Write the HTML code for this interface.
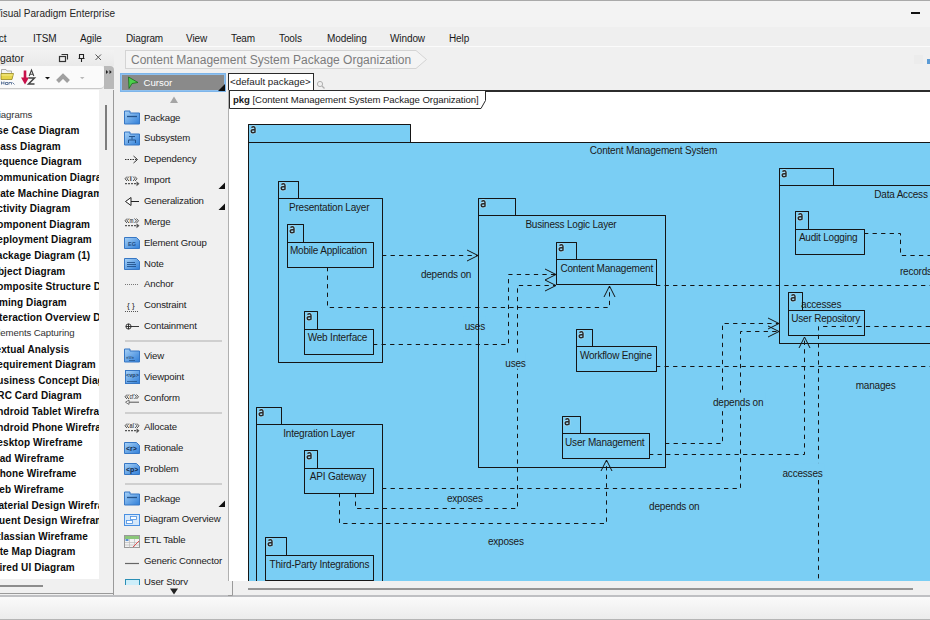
<!DOCTYPE html>
<html><head><meta charset="utf-8">
<style>
*{margin:0;padding:0;box-sizing:border-box}
html,body{width:930px;height:620px;overflow:hidden;background:#f0f0f0;font-family:"Liberation Sans",sans-serif;color:#1a1a1a}
.a{position:absolute;white-space:nowrap}
.mi{position:absolute;top:33px;font-size:10px;color:#1a1a1a;letter-spacing:-0.1px}
.tr{position:absolute;left:-10px;font-size:10px;font-weight:bold;color:#0c0c0c;letter-spacing:0.1px;height:15px;line-height:15px}
.tn{font-weight:normal;color:#333;letter-spacing:-0.1px;font-size:9.6px;left:-8px;margin-top:-1px}
.pi{position:absolute;left:144px;font-size:9.6px;color:#1a1a1a;height:14px;line-height:14px;letter-spacing:-0.15px}
</style></head><body>
<div class="a" style="left:0;top:0;width:930px;height:27px;background:#f3f3f3;border-top:1px solid #a9a9a9"></div>
<span class="a" style="left:-6px;top:8px;font-size:10px;color:#262626">Visual Paradigm Enterprise</span>
<div class="a" style="left:911px;top:12px;width:9px;height:2px;background:#111"></div>
<div class="a" style="left:0;top:27px;width:930px;height:20px;background:#efefef;border-bottom:1px solid #fbfbfb"></div>
<span class="mi a" style="left:-24px">Project</span>
<span class="mi a" style="left:33px">ITSM</span>
<span class="mi a" style="left:80px">Agile</span>
<span class="mi a" style="left:126px">Diagram</span>
<span class="mi a" style="left:186px">View</span>
<span class="mi a" style="left:231px">Team</span>
<span class="mi a" style="left:279px">Tools</span>
<span class="mi a" style="left:327px">Modeling</span>
<span class="mi a" style="left:390px">Window</span>
<span class="mi a" style="left:449px">Help</span>
<div class="a" style="left:125px;top:50px;width:290px;height:19px;background:#f4f4f4;border:1px solid #d4d4d4;border-right:none"></div>
<span class="a" style="left:131px;top:52.8px;font-size:12px;color:#7c7c7c">Content Management System Package Organization</span>
<svg class="a" style="left:414px;top:50px" width="16" height="20"><path d="M0,0.5H2L12.5,9.5L2,18.5H0" fill="#f4f4f4" stroke="#d4d4d4"/></svg>
<div class="a" style="left:914px;top:55px;width:9px;height:9px;background:#ececec"></div><div class="a" style="left:927px;top:59px;width:3px;height:5px;background:#5b9bd5"></div>

<div class="a" style="left:0;top:50px;width:114px;height:16px;background:linear-gradient(#f2f2f2,#e9e9e9)"></div>
<span class="a" style="left:-21px;top:52px;font-size:10.5px;color:#222">Navigator</span>
<svg class="a" style="left:56px;top:52px" width="50" height="12"><rect x="3.5" y="4.5" width="6" height="5" fill="none" stroke="#333" stroke-width="1.2"/><path d="M5.5,2.5H11.5V7.5" fill="none" stroke="#333" stroke-width="1.1"/><path d="M23.5,2.5H27.5V6.5H23.5ZM22.5,6.5H28.5M25.5,6.5V10" fill="none" stroke="#222" stroke-width="1.1"/><path d="M39.5,2.5L45,8M45,2.5L39.5,8" stroke="#555" stroke-width="1"/></svg>
<div class="a" style="left:0;top:66px;width:104px;height:23px;background:#fafafa;border-radius:0 4px 4px 0;border-bottom:1px solid #c9c9c9"></div>
<div class="a" style="left:104px;top:66px;width:10px;height:23px;background:#b9b9b9;border-radius:0 4px 0 0"></div>
<svg class="a" style="left:0;top:66px" width="114" height="24">
  <path d="M1.5,12V3.5H6L7,5H11.5V7" fill="#f4f4f4" stroke="#9a9a9a" stroke-width=".8"/>
  <path d="M1,7.5H13.5L12,13.5H1Z" fill="#e6d44a" stroke="#8a7a10" stroke-width=".7"/>
  <path d="M1.5,9H12.8" stroke="#f5ec90" stroke-width="1"/>
  <path d="M1.5,15.5V18.5M1.5,17H4M4,15.5V18.5M5.5,16.5H8V18.5H5.5ZM9,18.5V16.5H11.5V18.5M12.5,16.5L14.5,18.5" stroke="#44608a" stroke-width=".8" fill="none"/>
  <path d="M25,4.5V13" stroke="#c8104a" stroke-width="2.6"/><path d="M21,11.5L25,18.5L29,11.5Z" fill="#c8104a"/>
  <path d="M29.2,10L31.5,4L33.8,10M30,8.2H33" stroke="#444" stroke-width="1.1" fill="none"/>
  <path d="M28.5,12H34.5L28.5,18H34.5" stroke="#444" stroke-width="1.5" fill="none"/>
  <path d="M45,11H50L47.5,13.5Z" fill="#111"/>
  <path d="M57.5,15.5L63,10L68.5,15.5" fill="none" stroke="#a0a0a0" stroke-width="4"/>
  <path d="M80,11H84.5L82.2,13.2Z" fill="#b8b8b8"/>
  <path d="M106,4L108.2,6L106,8ZM109.5,4L111.7,6L109.5,8Z" fill="#222"/>
</svg>
<div class="a" style="left:0;top:90px;width:99px;height:489px;background:#fff;overflow:hidden">
<span class="tr tn" style="top:17.5px">Diagrams</span>
<span class="tr" style="top:33.1px">Use Case Diagram</span>
<span class="tr" style="top:48.7px">Class Diagram</span>
<span class="tr" style="top:64.3px">Sequence Diagram</span>
<span class="tr" style="top:79.9px">Communication Diagram</span>
<span class="tr" style="top:95.5px">State Machine Diagram</span>
<span class="tr" style="top:111.1px">Activity Diagram</span>
<span class="tr" style="top:126.7px">Component Diagram</span>
<span class="tr" style="top:142.3px">Deployment Diagram</span>
<span class="tr" style="top:157.9px">Package Diagram (1)</span>
<span class="tr" style="top:173.5px">Object Diagram</span>
<span class="tr" style="top:189.1px">Composite Structure Diagram</span>
<span class="tr" style="top:204.7px">Timing Diagram</span>
<span class="tr" style="top:220.3px">Interaction Overview Diagram</span>
<span class="tr tn" style="top:235.9px">Elements Capturing</span>
<span class="tr" style="top:251.5px">Textual Analysis</span>
<span class="tr" style="top:267.1px">Requirement Diagram</span>
<span class="tr" style="top:282.7px">Business Concept Diagram</span>
<span class="tr" style="top:298.3px">CRC Card Diagram</span>
<span class="tr" style="top:313.9px">Android Tablet Wireframe</span>
<span class="tr" style="top:329.5px">Android Phone Wireframe</span>
<span class="tr" style="top:345.1px">Desktop Wireframe</span>
<span class="tr" style="top:360.7px">iPad Wireframe</span>
<span class="tr" style="top:376.3px">iPhone Wireframe</span>
<span class="tr" style="top:391.9px">Web Wireframe</span>
<span class="tr" style="top:407.5px">Material Design Wireframe</span>
<span class="tr" style="top:423.1px">Fluent Design Wireframe</span>
<span class="tr" style="top:438.7px">Atlassian Wireframe</span>
<span class="tr" style="top:454.3px">Site Map Diagram</span>
<span class="tr" style="top:469.9px">Wired UI Diagram</span>
</div>
<div class="a" style="left:99px;top:90px;width:14px;height:504px;background:#f0f0f0"></div><div class="a" style="left:0;top:579px;width:99px;height:14px;background:#f0f0f0"></div>
<div class="a" style="left:105px;top:105px;width:2px;height:45px;background:#7d7d7d"></div>
<div class="a" style="left:0;top:585px;width:43px;height:2px;background:#8c8c8c"></div>
<div class="a" style="left:113px;top:90px;width:1px;height:505px;background:#9a9a9a"></div>
<div class="a" style="left:0;top:593px;width:114px;height:1px;background:#9a9a9a"></div>


<div class="a" style="left:118px;top:72px;width:110px;height:513px;overflow:hidden">
<div class="a" style="left:-118px;top:-72px;width:930px;height:620px">
<svg class="a" style="left:124px;top:109.8px" width="17" height="17"><defs><linearGradient id="bg0" x1="0" y1="0" x2="1" y2="1"><stop offset="0" stop-color="#a8d2f7"/><stop offset="1" stop-color="#2f7ed8"/></linearGradient></defs><path d="M0.5,1H6V3H15.5V14H0.5Z" fill="url(#bg0)" stroke="#3777c4" stroke-width="1"/><path d="M3,6.5H13" stroke="#24548c" stroke-width="1.3"/></svg>
<svg class="a" style="left:124px;top:130.6px" width="17" height="17"><defs><linearGradient id="bg1" x1="0" y1="0" x2="1" y2="1"><stop offset="0" stop-color="#a8d2f7"/><stop offset="1" stop-color="#2f7ed8"/></linearGradient></defs><path d="M0.5,1H6V3H15.5V14H0.5Z" fill="url(#bg1)" stroke="#3777c4" stroke-width="1"/><path d="M5,5.5H11M8,5.5V8.5M4.5,12V9H11.5V12" fill="none" stroke="#24548c" stroke-width="1"/></svg>
<svg class="a" style="left:124px;top:151.4px" width="17" height="17"><path d="M1,8.5H13" stroke="#333" stroke-dasharray="1.5 1"/><path d="M9.5,5L13.5,8.5L9.5,12" fill="none" stroke="#333"/></svg>
<svg class="a" style="left:124px;top:172.1px" width="17" height="17"><path d="M3,4.5L1,6.8L3,9M5,4.5L3,6.8L5,9" fill="none" stroke="#555" stroke-width="1"/><text x="5.5" y="9.2" font-size="7" font-weight="bold" font-family="Liberation Sans" fill="#555" textLength="2.5" lengthAdjust="spacingAndGlyphs">i</text><path d="M9.0,4.5L11.0,6.8L9.0,9M11.0,4.5L13.0,6.8L11.0,9" fill="none" stroke="#555" stroke-width="1"/><path d="M1,11.7H13" stroke="#555" stroke-width="1.2" stroke-dasharray="2 1"/><path d="M12.5,9.2L15.5,11.7L12.5,14.2Z" fill="#555"/></svg>
<svg class="a" style="left:124px;top:193.4px" width="17" height="17"><path d="M1.5,8.5L7,4.5V12.5Z" fill="#fff" stroke="#222"/><path d="M7,8.5H15" stroke="#222"/></svg>
<svg class="a" style="left:124px;top:213.7px" width="17" height="17"><path d="M3,4.5L1,6.8L3,9M5,4.5L3,6.8L5,9" fill="none" stroke="#555" stroke-width="1"/><text x="5.5" y="9.2" font-size="7" font-weight="bold" font-family="Liberation Sans" fill="#555" textLength="4" lengthAdjust="spacingAndGlyphs">m</text><path d="M10.5,4.5L12.5,6.8L10.5,9M12.5,4.5L14.5,6.8L12.5,9" fill="none" stroke="#555" stroke-width="1"/><path d="M1,11.7H13" stroke="#555" stroke-width="1.2" stroke-dasharray="2 1"/><path d="M12.5,9.2L15.5,11.7L12.5,14.2Z" fill="#555"/></svg>
<svg class="a" style="left:124px;top:234.9px" width="17" height="17"><defs><linearGradient id="bg6" x1="0" y1="0" x2="1" y2="1"><stop offset="0" stop-color="#a8d2f7"/><stop offset="1" stop-color="#2f7ed8"/></linearGradient></defs><path d="M0.5,2.5H12.5L15.5,5.5V13.5H0.5Z" fill="url(#bg6)" stroke="#3777c4" stroke-width="1"/><text x="4" y="11" font-size="5.5" font-family="Liberation Sans" font-weight="bold" fill="#1f4f86">EG</text></svg>
<svg class="a" style="left:124px;top:255.7px" width="17" height="17"><defs><linearGradient id="bg7" x1="0" y1="0" x2="1" y2="1"><stop offset="0" stop-color="#a8d2f7"/><stop offset="1" stop-color="#2f7ed8"/></linearGradient></defs><path d="M0.5,2.5H12.5L15.5,5.5V13.5H0.5Z" fill="url(#bg7)" stroke="#3777c4" stroke-width="1"/><path d="M3,6.5H11M3,8.5H12M3,10.5H12" stroke="#24548c" stroke-width=".9"/></svg>
<svg class="a" style="left:124px;top:276.4px" width="17" height="17"><path d="M1,8.5H15" stroke="#777" stroke-dasharray="1 1"/></svg>
<svg class="a" style="left:124px;top:297.6px" width="17" height="17"><text x="3" y="10" font-size="8" font-family="Liberation Sans" font-weight="normal" fill="#222">{ }</text><path d="M1,13.5H15" stroke="#555" stroke-dasharray="1 1"/></svg>
<svg class="a" style="left:124px;top:318.4px" width="17" height="17"><circle cx="4.5" cy="8.5" r="2.6" fill="none" stroke="#222" stroke-width=".9"/><path d="M1.9,8.5H15M4.5,5.9V11.1" stroke="#222" stroke-width=".9"/></svg>
<svg class="a" style="left:124px;top:348.2px" width="17" height="17"><defs><linearGradient id="bg11" x1="0" y1="0" x2="1" y2="1"><stop offset="0" stop-color="#a8d2f7"/><stop offset="1" stop-color="#2f7ed8"/></linearGradient></defs><path d="M0.5,1H6V3H15.5V14H0.5Z" fill="url(#bg11)" stroke="#3777c4" stroke-width="1"/><text x="2" y="11" font-size="5" font-family="Liberation Sans" font-weight="normal" fill="#1f3f66">«v»</text><path d="M5,12.5H11" stroke="#24548c" stroke-width=".8"/></svg>
<svg class="a" style="left:124px;top:369.3px" width="17" height="17"><defs><linearGradient id="bg12" x1="0" y1="0" x2="1" y2="1"><stop offset="0" stop-color="#a8d2f7"/><stop offset="1" stop-color="#2f7ed8"/></linearGradient></defs><rect x="1.5" y="1.5" width="14" height="13" fill="url(#bg12)" stroke="#3777c4"/><text x="2" y="8" font-size="5.5" font-family="Liberation Sans" font-weight="bold" fill="#1f3f66">&lt;vp&gt;</text><path d="M3,12.5H13" stroke="#24548c" stroke-width=".8"/></svg>
<svg class="a" style="left:124px;top:389.9px" width="17" height="17"><path d="M3,4.5L1,6.8L3,9M5,4.5L3,6.8L5,9" fill="none" stroke="#555" stroke-width="1"/><text x="5.5" y="9.2" font-size="7" font-weight="bold" font-family="Liberation Sans" fill="#555" textLength="4" lengthAdjust="spacingAndGlyphs">cf</text><path d="M10.5,4.5L12.5,6.8L10.5,9M12.5,4.5L14.5,6.8L12.5,9" fill="none" stroke="#555" stroke-width="1"/><path d="M3,12.2H15" stroke="#555" stroke-width="1"/><path d="M5,10L1.5,12.2L5,14.4Z" fill="#fff" stroke="#555" stroke-width=".8"/></svg>
<svg class="a" style="left:124px;top:419.3px" width="17" height="17"><path d="M3,4.5L1,6.8L3,9M5,4.5L3,6.8L5,9" fill="none" stroke="#555" stroke-width="1"/><text x="5.5" y="9.2" font-size="7" font-weight="bold" font-family="Liberation Sans" fill="#555" textLength="4.5" lengthAdjust="spacingAndGlyphs">al</text><path d="M11.0,4.5L13.0,6.8L11.0,9M13.0,4.5L15.0,6.8L13.0,9" fill="none" stroke="#555" stroke-width="1"/><path d="M1,11.7H13" stroke="#555" stroke-width="1.2" stroke-dasharray="2 1"/><path d="M12.5,9.2L15.5,11.7L12.5,14.2Z" fill="#555"/></svg>
<svg class="a" style="left:124px;top:440.4px" width="17" height="17"><defs><linearGradient id="bg15" x1="0" y1="0" x2="1" y2="1"><stop offset="0" stop-color="#a8d2f7"/><stop offset="1" stop-color="#2f7ed8"/></linearGradient></defs><path d="M0.5,2.5H12.5L15.5,5.5V13.5H0.5Z" fill="url(#bg15)" stroke="#3777c4" stroke-width="1"/><text x="2" y="11" font-size="7" font-family="Liberation Sans" font-weight="bold" fill="#112a4a">&lt;r&gt;</text></svg>
<svg class="a" style="left:124px;top:461.4px" width="17" height="17"><defs><linearGradient id="bg16" x1="0" y1="0" x2="1" y2="1"><stop offset="0" stop-color="#a8d2f7"/><stop offset="1" stop-color="#2f7ed8"/></linearGradient></defs><path d="M0.5,2.5H12.5L15.5,5.5V13.5H0.5Z" fill="url(#bg16)" stroke="#3777c4" stroke-width="1"/><text x="2" y="11" font-size="7" font-family="Liberation Sans" font-weight="bold" fill="#112a4a">&lt;p&gt;</text></svg>
<svg class="a" style="left:124px;top:490.9px" width="17" height="17"><defs><linearGradient id="bg17" x1="0" y1="0" x2="1" y2="1"><stop offset="0" stop-color="#a8d2f7"/><stop offset="1" stop-color="#2f7ed8"/></linearGradient></defs><path d="M0.5,1H6V3H15.5V14H0.5Z" fill="url(#bg17)" stroke="#3777c4" stroke-width="1"/><path d="M3,6.5H13" stroke="#24548c" stroke-width="1.3"/></svg>
<svg class="a" style="left:124px;top:511.5px" width="17" height="17"><rect x="0.5" y="2.5" width="15" height="11" fill="#d6e8fa" stroke="#4a90e2"/><rect x="6.5" y="4.5" width="6" height="3" fill="#fff" stroke="#4a90e2" stroke-width=".8"/><rect x="2.5" y="8.5" width="6" height="3" fill="#fff" stroke="#4a90e2" stroke-width=".8"/></svg>
<svg class="a" style="left:124px;top:532.5px" width="17" height="17"><rect x="0.5" y="2.5" width="15" height="12" fill="#f2f2f2" stroke="#999"/><rect x="1" y="3" width="14" height="3" fill="#8bc77a"/><path d="M1,9.5H15M1,12H15M5.5,6V14.5M10.5,6V14.5" stroke="#bbb" stroke-width=".7"/><path d="M9,14L15,8" stroke="#e05050" stroke-width="1"/><rect x="1.5" y="6" width="3" height="2" fill="#5b8fd0"/></svg>
<svg class="a" style="left:124px;top:553.5px" width="17" height="17"><path d="M1,9.5H15" stroke="#666" stroke-width="1.2"/></svg>
<svg class="a" style="left:124px;top:573.7px" width="17" height="17"><rect x="1.5" y="5.5" width="14" height="10" fill="#cdeefa" stroke="#2a8fb5"/></svg>
<span class="pi" style="top:110.6px">Package</span>
<span class="pi" style="top:131.4px">Subsystem</span>
<span class="pi" style="top:152.2px">Dependency</span>
<span class="pi" style="top:172.9px">Import</span>
<span class="pi" style="top:194.2px">Generalization</span>
<span class="pi" style="top:214.5px">Merge</span>
<span class="pi" style="top:235.7px">Element Group</span>
<span class="pi" style="top:256.5px">Note</span>
<span class="pi" style="top:277.2px">Anchor</span>
<span class="pi" style="top:298.4px">Constraint</span>
<span class="pi" style="top:319.2px">Containment</span>
<span class="pi" style="top:349.0px">View</span>
<span class="pi" style="top:370.1px">Viewpoint</span>
<span class="pi" style="top:390.7px">Conform</span>
<span class="pi" style="top:420.1px">Allocate</span>
<span class="pi" style="top:441.2px">Rationale</span>
<span class="pi" style="top:462.2px">Problem</span>
<span class="pi" style="top:491.7px">Package</span>
<span class="pi" style="top:512.3px">Diagram Overview</span>
<span class="pi" style="top:533.3px">ETL Table</span>
<span class="pi" style="top:554.3px">Generic Connector</span>
<span class="pi" style="top:574.5px">User Story</span>
</div></div>
<div class="a" style="left:125px;top:340px;width:97px;height:2px;background:#cfcfcf"></div>
<div class="a" style="left:125px;top:412px;width:97px;height:2px;background:#cfcfcf"></div>
<div class="a" style="left:125px;top:483px;width:97px;height:2px;background:#cfcfcf"></div>
<svg class="a" style="left:218px;top:182px" width="8" height="8"><path d="M7,0.5V7H0.5Z" fill="#111"/></svg>
<svg class="a" style="left:218px;top:203px" width="8" height="8"><path d="M7,0.5V7H0.5Z" fill="#111"/></svg>
<svg class="a" style="left:218px;top:500px" width="8" height="8"><path d="M7,0.5V7H0.5Z" fill="#111"/></svg>
<svg class="a" style="left:169px;top:587px" width="10" height="9"><path d="M1,1.5H9L5,7.5Z" fill="#222"/></svg>

<div class="a" style="left:120px;top:73px;width:106px;height:19px;background:#8a8a8a;border:1px solid #7db5ea;box-shadow:inset 0 0 0 1px #8fc0ee"></div>
<svg class="a" style="left:126px;top:76px" width="16" height="14"><path d="M2.5,1L12,6.5L6,7.5L3,12.5Z" fill="#4cd04c" stroke="#1a6a1a" stroke-width=".8"/></svg>
<span class="a" style="left:143.5px;top:77.2px;font-size:9.6px;color:#fff">Cursor</span>
<svg class="a" style="left:218px;top:84px" width="8" height="8"><path d="M7,0V7H0Z" fill="#111"/></svg>
<svg class="a" style="left:169px;top:95px" width="10" height="9"><path d="M1,8L5,1.5L9,8Z" fill="#a5a5a5"/></svg>


<div class="a" style="left:228px;top:90px;width:702px;height:491px;background:#fff;overflow:hidden">
<svg class="a" style="left:-228px;top:-90px" width="1100" height="720">
<style>.f{fill:#7acef4;stroke:none} .s{fill:none;stroke:#151515;stroke-width:1} .d{fill:none;stroke:#151515;stroke-width:1;stroke-dasharray:4.3 4.25} .lb{font-family:"Liberation Sans",sans-serif;font-size:10px;letter-spacing:-0.2px;fill:#1a1a1a} .ta{font-family:"Liberation Sans",sans-serif;font-size:11.5px;font-weight:bold;fill:#2a2a2a} .m{fill:#7acef4} .ap{fill:none;stroke:#2a2a2a;stroke-width:1.45} .ah{fill:none;stroke:rgba(255,255,255,.35);stroke-width:2.8}</style>
<rect x="248.5" y="124.5" width="162" height="18" class="f"/><rect x="248.5" y="142.5" width="812" height="558" class="f"/><g transform="translate(250.4,126.4)"><path d="M1,1.1Q2.1,0.2 3.3,0.3Q4.6,0.5 4.6,2.1V6.4M4.6,3.3H2.5Q0.8,3.3 0.8,4.9Q0.8,6.4 2.4,6.4Q3.8,6.4 4.6,5.5" class="ah"/><path d="M1,1.1Q2.1,0.2 3.3,0.3Q4.6,0.5 4.6,2.1V6.4M4.6,3.3H2.5Q0.8,3.3 0.8,4.9Q0.8,6.4 2.4,6.4Q3.8,6.4 4.6,5.5" class="ap"/></g><path d="M248.5,700.5V124.5H410.5V142.5M248.5,142.5H1060.5V700.5H248.5" class="s"/>
<rect x="278.5" y="181.5" width="20" height="17" class="f"/><rect x="278.5" y="198.5" width="104" height="164" class="f"/><g transform="translate(280.4,183.4)"><path d="M1,1.1Q2.1,0.2 3.3,0.3Q4.6,0.5 4.6,2.1V6.4M4.6,3.3H2.5Q0.8,3.3 0.8,4.9Q0.8,6.4 2.4,6.4Q3.8,6.4 4.6,5.5" class="ah"/><path d="M1,1.1Q2.1,0.2 3.3,0.3Q4.6,0.5 4.6,2.1V6.4M4.6,3.3H2.5Q0.8,3.3 0.8,4.9Q0.8,6.4 2.4,6.4Q3.8,6.4 4.6,5.5" class="ap"/></g><path d="M278.5,362.5V181.5H298.5V198.5M278.5,198.5H382.5V362.5H278.5" class="s"/>
<rect x="287.5" y="224.5" width="16" height="18" class="f"/><rect x="287.5" y="242.5" width="86" height="25" class="f"/><g transform="translate(289.4,226.4)"><path d="M1,1.1Q2.1,0.2 3.3,0.3Q4.6,0.5 4.6,2.1V6.4M4.6,3.3H2.5Q0.8,3.3 0.8,4.9Q0.8,6.4 2.4,6.4Q3.8,6.4 4.6,5.5" class="ah"/><path d="M1,1.1Q2.1,0.2 3.3,0.3Q4.6,0.5 4.6,2.1V6.4M4.6,3.3H2.5Q0.8,3.3 0.8,4.9Q0.8,6.4 2.4,6.4Q3.8,6.4 4.6,5.5" class="ap"/></g><path d="M287.5,267.5V224.5H303.5V242.5M287.5,242.5H373.5V267.5H287.5" class="s"/>
<rect x="304.5" y="311.5" width="13" height="18" class="f"/><rect x="304.5" y="329.5" width="69" height="25" class="f"/><g transform="translate(306.4,313.4)"><path d="M1,1.1Q2.1,0.2 3.3,0.3Q4.6,0.5 4.6,2.1V6.4M4.6,3.3H2.5Q0.8,3.3 0.8,4.9Q0.8,6.4 2.4,6.4Q3.8,6.4 4.6,5.5" class="ah"/><path d="M1,1.1Q2.1,0.2 3.3,0.3Q4.6,0.5 4.6,2.1V6.4M4.6,3.3H2.5Q0.8,3.3 0.8,4.9Q0.8,6.4 2.4,6.4Q3.8,6.4 4.6,5.5" class="ap"/></g><path d="M304.5,354.5V311.5H317.5V329.5M304.5,329.5H373.5V354.5H304.5" class="s"/>
<rect x="478.5" y="198.5" width="37" height="17" class="f"/><rect x="478.5" y="215.5" width="187" height="252" class="f"/><g transform="translate(480.4,200.4)"><path d="M1,1.1Q2.1,0.2 3.3,0.3Q4.6,0.5 4.6,2.1V6.4M4.6,3.3H2.5Q0.8,3.3 0.8,4.9Q0.8,6.4 2.4,6.4Q3.8,6.4 4.6,5.5" class="ah"/><path d="M1,1.1Q2.1,0.2 3.3,0.3Q4.6,0.5 4.6,2.1V6.4M4.6,3.3H2.5Q0.8,3.3 0.8,4.9Q0.8,6.4 2.4,6.4Q3.8,6.4 4.6,5.5" class="ap"/></g><path d="M478.5,467.5V198.5H515.5V215.5M478.5,215.5H665.5V467.5H478.5" class="s"/>
<rect x="556.5" y="242.5" width="20" height="17" class="f"/><rect x="556.5" y="259.5" width="100" height="25" class="f"/><g transform="translate(558.4,244.4)"><path d="M1,1.1Q2.1,0.2 3.3,0.3Q4.6,0.5 4.6,2.1V6.4M4.6,3.3H2.5Q0.8,3.3 0.8,4.9Q0.8,6.4 2.4,6.4Q3.8,6.4 4.6,5.5" class="ah"/><path d="M1,1.1Q2.1,0.2 3.3,0.3Q4.6,0.5 4.6,2.1V6.4M4.6,3.3H2.5Q0.8,3.3 0.8,4.9Q0.8,6.4 2.4,6.4Q3.8,6.4 4.6,5.5" class="ap"/></g><path d="M556.5,284.5V242.5H576.5V259.5M556.5,259.5H656.5V284.5H556.5" class="s"/>
<rect x="576.5" y="329.5" width="16" height="17" class="f"/><rect x="576.5" y="346.5" width="80" height="25" class="f"/><g transform="translate(578.4,331.4)"><path d="M1,1.1Q2.1,0.2 3.3,0.3Q4.6,0.5 4.6,2.1V6.4M4.6,3.3H2.5Q0.8,3.3 0.8,4.9Q0.8,6.4 2.4,6.4Q3.8,6.4 4.6,5.5" class="ah"/><path d="M1,1.1Q2.1,0.2 3.3,0.3Q4.6,0.5 4.6,2.1V6.4M4.6,3.3H2.5Q0.8,3.3 0.8,4.9Q0.8,6.4 2.4,6.4Q3.8,6.4 4.6,5.5" class="ap"/></g><path d="M576.5,371.5V329.5H592.5V346.5M576.5,346.5H656.5V371.5H576.5" class="s"/>
<rect x="562.5" y="416.5" width="18" height="17" class="f"/><rect x="562.5" y="433.5" width="87" height="25" class="f"/><g transform="translate(564.4,418.4)"><path d="M1,1.1Q2.1,0.2 3.3,0.3Q4.6,0.5 4.6,2.1V6.4M4.6,3.3H2.5Q0.8,3.3 0.8,4.9Q0.8,6.4 2.4,6.4Q3.8,6.4 4.6,5.5" class="ah"/><path d="M1,1.1Q2.1,0.2 3.3,0.3Q4.6,0.5 4.6,2.1V6.4M4.6,3.3H2.5Q0.8,3.3 0.8,4.9Q0.8,6.4 2.4,6.4Q3.8,6.4 4.6,5.5" class="ap"/></g><path d="M562.5,458.5V416.5H580.5V433.5M562.5,433.5H649.5V458.5H562.5" class="s"/>
<rect x="779.5" y="168.5" width="54" height="17" class="f"/><rect x="779.5" y="185.5" width="251" height="158" class="f"/><g transform="translate(781.4,170.4)"><path d="M1,1.1Q2.1,0.2 3.3,0.3Q4.6,0.5 4.6,2.1V6.4M4.6,3.3H2.5Q0.8,3.3 0.8,4.9Q0.8,6.4 2.4,6.4Q3.8,6.4 4.6,5.5" class="ah"/><path d="M1,1.1Q2.1,0.2 3.3,0.3Q4.6,0.5 4.6,2.1V6.4M4.6,3.3H2.5Q0.8,3.3 0.8,4.9Q0.8,6.4 2.4,6.4Q3.8,6.4 4.6,5.5" class="ap"/></g><path d="M779.5,343.5V168.5H833.5V185.5M779.5,185.5H1030.5V343.5H779.5" class="s"/>
<rect x="795.5" y="211.5" width="13" height="18" class="f"/><rect x="795.5" y="229.5" width="69" height="25" class="f"/><g transform="translate(797.4,213.4)"><path d="M1,1.1Q2.1,0.2 3.3,0.3Q4.6,0.5 4.6,2.1V6.4M4.6,3.3H2.5Q0.8,3.3 0.8,4.9Q0.8,6.4 2.4,6.4Q3.8,6.4 4.6,5.5" class="ah"/><path d="M1,1.1Q2.1,0.2 3.3,0.3Q4.6,0.5 4.6,2.1V6.4M4.6,3.3H2.5Q0.8,3.3 0.8,4.9Q0.8,6.4 2.4,6.4Q3.8,6.4 4.6,5.5" class="ap"/></g><path d="M795.5,254.5V211.5H808.5V229.5M795.5,229.5H864.5V254.5H795.5" class="s"/>
<rect x="788.5" y="292.5" width="14" height="18" class="f"/><rect x="788.5" y="310.5" width="76" height="25" class="f"/><g transform="translate(790.4,294.4)"><path d="M1,1.1Q2.1,0.2 3.3,0.3Q4.6,0.5 4.6,2.1V6.4M4.6,3.3H2.5Q0.8,3.3 0.8,4.9Q0.8,6.4 2.4,6.4Q3.8,6.4 4.6,5.5" class="ah"/><path d="M1,1.1Q2.1,0.2 3.3,0.3Q4.6,0.5 4.6,2.1V6.4M4.6,3.3H2.5Q0.8,3.3 0.8,4.9Q0.8,6.4 2.4,6.4Q3.8,6.4 4.6,5.5" class="ap"/></g><path d="M788.5,335.5V292.5H802.5V310.5M788.5,310.5H864.5V335.5H788.5" class="s"/>
<rect x="256.5" y="407.5" width="25" height="17" class="f"/><rect x="256.5" y="424.5" width="126" height="276" class="f"/><g transform="translate(258.4,409.4)"><path d="M1,1.1Q2.1,0.2 3.3,0.3Q4.6,0.5 4.6,2.1V6.4M4.6,3.3H2.5Q0.8,3.3 0.8,4.9Q0.8,6.4 2.4,6.4Q3.8,6.4 4.6,5.5" class="ah"/><path d="M1,1.1Q2.1,0.2 3.3,0.3Q4.6,0.5 4.6,2.1V6.4M4.6,3.3H2.5Q0.8,3.3 0.8,4.9Q0.8,6.4 2.4,6.4Q3.8,6.4 4.6,5.5" class="ap"/></g><path d="M256.5,700.5V407.5H281.5V424.5M256.5,424.5H382.5V700.5H256.5" class="s"/>
<rect x="304.5" y="450.5" width="13" height="18" class="f"/><rect x="304.5" y="468.5" width="69" height="25" class="f"/><g transform="translate(306.4,452.4)"><path d="M1,1.1Q2.1,0.2 3.3,0.3Q4.6,0.5 4.6,2.1V6.4M4.6,3.3H2.5Q0.8,3.3 0.8,4.9Q0.8,6.4 2.4,6.4Q3.8,6.4 4.6,5.5" class="ah"/><path d="M1,1.1Q2.1,0.2 3.3,0.3Q4.6,0.5 4.6,2.1V6.4M4.6,3.3H2.5Q0.8,3.3 0.8,4.9Q0.8,6.4 2.4,6.4Q3.8,6.4 4.6,5.5" class="ap"/></g><path d="M304.5,493.5V450.5H317.5V468.5M304.5,468.5H373.5V493.5H304.5" class="s"/>
<rect x="265.5" y="537.5" width="21" height="18" class="f"/><rect x="265.5" y="555.5" width="108" height="25" class="f"/><g transform="translate(267.4,539.4)"><path d="M1,1.1Q2.1,0.2 3.3,0.3Q4.6,0.5 4.6,2.1V6.4M4.6,3.3H2.5Q0.8,3.3 0.8,4.9Q0.8,6.4 2.4,6.4Q3.8,6.4 4.6,5.5" class="ah"/><path d="M1,1.1Q2.1,0.2 3.3,0.3Q4.6,0.5 4.6,2.1V6.4M4.6,3.3H2.5Q0.8,3.3 0.8,4.9Q0.8,6.4 2.4,6.4Q3.8,6.4 4.6,5.5" class="ap"/></g><path d="M265.5,580.5V537.5H286.5V555.5M265.5,555.5H373.5V580.5H265.5" class="s"/>
<path d="M382,255.5H478" class="d"/>
<path d="M327.5,267V307.5H609.5V286" class="d"/>
<path d="M373,344.5H508.5V274.5H556" class="d"/>
<path d="M355.5,493V508.5H517.5V285.5H556" class="d"/>
<path d="M382,488.5H740.5V331.5H779" class="d"/>
<path d="M339.5,493V523.5H606.5V460" class="d"/>
<path d="M665,443.5H722.5V323.5H779" class="d"/>
<path d="M649,454.5H804.5V337" class="d"/>
<path d="M656,285.5H930" class="d"/>
<path d="M864,233.5H900.5V255.5H930" class="d"/>
<path d="M930,326.5H818.5V600" class="d"/>
<path d="M656,366.5H930" class="d"/>
<path d="M467,250.0L478,255.5L467,261.0" class="s"/><path d="M604.0,297L609.5,286L615.0,297" class="s"/><path d="M545,269.0L556,274.5L545,280.0" class="s"/><path d="M545,280.0L556,285.5L545,291.0" class="s"/><path d="M768,326.0L779,331.5L768,337.0" class="s"/><path d="M601.0,471L606.5,460L612.0,471" class="s"/><path d="M768,318.0L779,323.5L768,329.0" class="s"/><path d="M799.0,348L804.5,337L810.0,348" class="s"/>
<text x="589.8" y="153.8" class="lb">Content Management System</text>
<text x="289.0" y="210.6" class="lb">Presentation Layer</text>
<text x="289.9" y="254.1" class="lb">Mobile Application</text>
<text x="307.7" y="341.0" class="lb">Web Interface</text>
<text x="525.4" y="228.1" class="lb">Business Logic Layer</text>
<text x="560.4" y="271.7" class="lb">Content Management</text>
<text x="579.9" y="358.5" class="lb">Workflow Engine</text>
<text x="565.1" y="445.5" class="lb">User Management</text>
<text x="874.3" y="197.7" class="lb">Data Access</text>
<text x="798.9" y="241.1" class="lb">Audit Logging</text>
<text x="791.3" y="322.1" class="lb">User Repository</text>
<text x="283.2" y="436.9" class="lb">Integration Layer</text>
<text x="309.8" y="480.4" class="lb">API Gateway</text>
<text x="269.6" y="567.7" class="lb">Third-Party Integrations</text>
<text x="420.9" y="278.1" class="lb">depends on</text>
<rect x="463.9" y="316.4" width="21.2" height="15" class="m"/><text x="464.7" y="330.0" class="lb">uses</text>
<rect x="504.5" y="353.7" width="21.2" height="15" class="m"/><text x="505.3" y="367.3" class="lb">uses</text>
<text x="446.9" y="502.1" class="lb">exposes</text>
<text x="649.1" y="510.1" class="lb">depends on</text>
<text x="487.9" y="545.1" class="lb">exposes</text>
<rect x="712.2" y="392.5" width="53.0" height="15" class="m"/><text x="713.0" y="406.1" class="lb">depends on</text>
<rect x="781.7" y="463.1" width="42.4" height="15" class="m"/><text x="782.5" y="476.7" class="lb">accesses</text>
<text x="855.7" y="388.8" class="lb">manages</text>
<text x="899.9" y="274.8" class="lb">records</text>
<text x="801.1" y="307.9" class="lb">accesses</text>
<path d="M248.5,700.5V124.5H410.5V142.5M248.5,142.5H1060.5V700.5H248.5" class="s"/><path d="M278.5,362.5V181.5H298.5V198.5M278.5,198.5H382.5V362.5H278.5" class="s"/><path d="M287.5,267.5V224.5H303.5V242.5M287.5,242.5H373.5V267.5H287.5" class="s"/><path d="M304.5,354.5V311.5H317.5V329.5M304.5,329.5H373.5V354.5H304.5" class="s"/><path d="M478.5,467.5V198.5H515.5V215.5M478.5,215.5H665.5V467.5H478.5" class="s"/><path d="M556.5,284.5V242.5H576.5V259.5M556.5,259.5H656.5V284.5H556.5" class="s"/><path d="M576.5,371.5V329.5H592.5V346.5M576.5,346.5H656.5V371.5H576.5" class="s"/><path d="M562.5,458.5V416.5H580.5V433.5M562.5,433.5H649.5V458.5H562.5" class="s"/><path d="M779.5,343.5V168.5H833.5V185.5M779.5,185.5H1030.5V343.5H779.5" class="s"/><path d="M795.5,254.5V211.5H808.5V229.5M795.5,229.5H864.5V254.5H795.5" class="s"/><path d="M788.5,335.5V292.5H802.5V310.5M788.5,310.5H864.5V335.5H788.5" class="s"/><path d="M256.5,700.5V407.5H281.5V424.5M256.5,424.5H382.5V700.5H256.5" class="s"/><path d="M304.5,493.5V450.5H317.5V468.5M304.5,468.5H373.5V493.5H304.5" class="s"/><path d="M265.5,580.5V537.5H286.5V555.5M265.5,555.5H373.5V580.5H265.5" class="s"/>
</svg>
</div>
<div class="a" style="left:228px;top:73px;width:86px;height:17px;background:#fff;border:1px solid #2a2a2a;border-bottom:none"></div>
<div class="a" style="left:228px;top:90px;width:702px;height:2px;background:#2c2c2c"></div>
<span class="a" style="left:230px;top:76px;font-size:9.8px;color:#222">&lt;default package&gt;</span>
<svg class="a" style="left:316px;top:80px" width="10" height="10"><circle cx="4" cy="4" r="2.6" fill="none" stroke="#b0b0b0" stroke-width="1"/><path d="M6,6L8.5,8.5" stroke="#b0b0b0" stroke-width="1.2"/></svg>
<svg class="a" style="left:228px;top:91px" width="262" height="20"><path d="M1.5,0V17.5H253L257.5,9.5V0" fill="#fff" stroke="#2a2a2a"/></svg>
<span class="a" style="left:233px;top:94px;font-size:9.6px;color:#1a1a1a;letter-spacing:-0.065px"><b>pkg</b> [Content Management System Package Organization]</span>

<div class="a" style="left:228px;top:581px;width:702px;height:15px;background:#f0f0f0"></div>
<div class="a" style="left:248px;top:588px;width:665px;height:2px;background:#959595"></div>
<div class="a" style="left:0;top:595px;width:930px;height:25px;background:linear-gradient(#fafafa,#ececec);border-top:2px solid #bfc0c3;border-bottom:1px solid #b5b5b5"></div>
<div class="a" style="left:228px;top:90px;width:1px;height:491px;background:#b0b0b0"></div><svg class="a" style="left:228px;top:581px" width="6" height="16"><path d="M4.5,0V14.5H0" fill="none" stroke="#9a9a9a"/></svg>
</body></html>
